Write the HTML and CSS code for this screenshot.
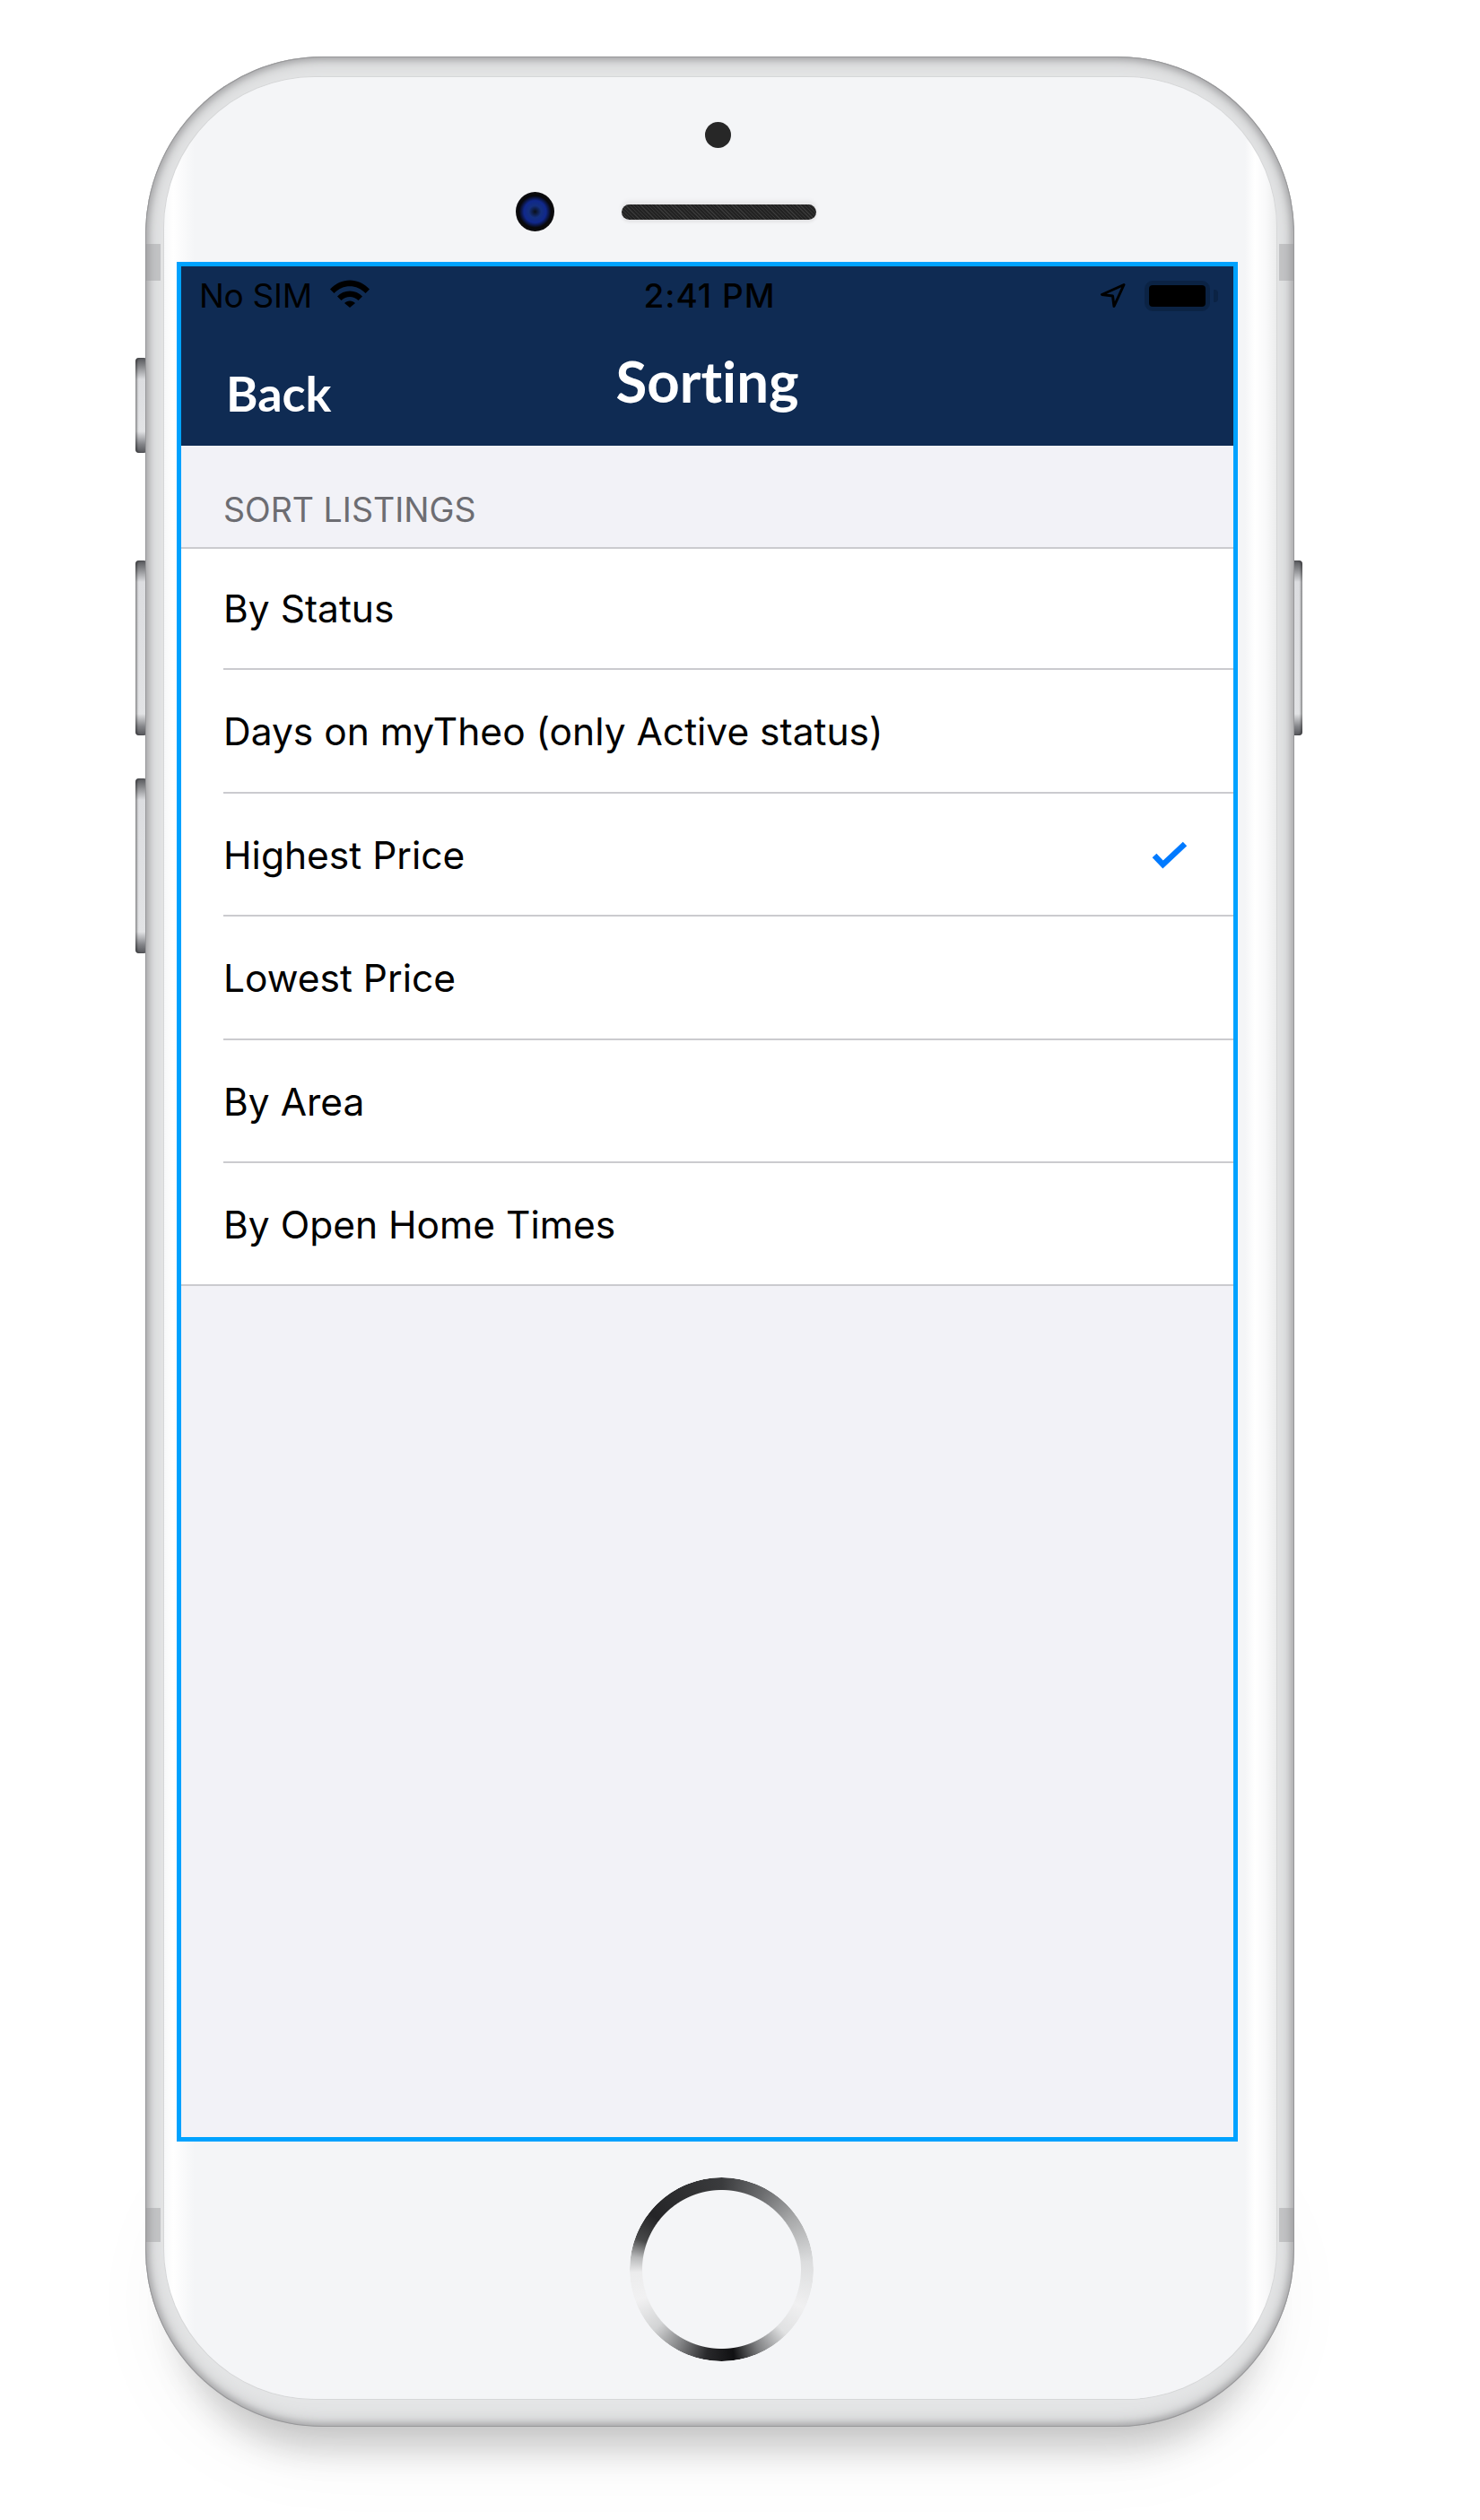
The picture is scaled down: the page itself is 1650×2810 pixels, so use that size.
FILE: index.html
```html
<!DOCTYPE html>
<html lang="en">
<head>
  <meta charset="UTF-8">
  <title>Sorting</title>
  <link rel="stylesheet" href="styles.css">
</head>
<body>

  <div class="phone">
    <span class="side-btn btn-mute"></span>
    <span class="side-btn btn-up"></span>
    <span class="side-btn btn-down"></span>
    <span class="side-btn btn-power"></span>
    <span class="band band-tl"></span>
    <span class="band band-tr"></span>
    <span class="band band-bl"></span>
    <span class="band band-br"></span>

    <div class="face">
      <div class="earpiece">
        <span class="sensor"></span>
        <div class="camera-row">
          <span class="camera"></span>
          <span class="speaker"></span>
        </div>
      </div>

      <div class="screen">
        <header class="navbar">
          <div class="status-bar">
            <div class="status-left">
              <span>No SIM</span>
              <svg class="wifi" viewBox="0 0 44 31">
                <path d="M0 10.5C12 -3 32 -3 44 10.5L39.5 15C30 4.5 14 4.5 4.5 15Z"/>
                <path d="M8 18.5C15 10.5 29 10.5 36 18.5L31.5 23C26 17.5 18 17.5 12.500 23Z"/>
                <path d="M16 26C19 22.500 25 22.500 28 26L22 31Z"/>
              </svg>
            </div>
            <span class="status-time">2:41 PM</span>
            <div class="status-right">
              <svg class="arrow" viewBox="0 0 28 27">
                <path d="M26 1.500L1.500 12.500L13.500 14L15 25.500Z"/>
              </svg>
              <span class="battery"><span class="battery-fill"></span></span>
              <span class="battery-nub"></span>
            </div>
          </div>
          <div class="nav-row">
            <span class="nav-back">Back</span>
            <h1 class="nav-title">Sorting</h1>
            <span></span>
          </div>
        </header>

        <h2 class="section-label">SORT LISTINGS</h2>
        <ul class="sort-list">
          <li><div class="row">By Status</div></li>
          <li><div class="row">Days on myTheo (only Active status)</div></li>
          <li>
            <div class="row">
              Highest Price
              <svg class="check" viewBox="0 0 42 33">
                <path d="M4 17L13.500 27L38 4"/>
              </svg>
            </div>
          </li>
          <li><div class="row">Lowest Price</div></li>
          <li><div class="row">By Area</div></li>
          <li><div class="row">By Open Home Times</div></li>
        </ul>
      </div>

      <div class="chin">
        <span class="home-btn"></span>
      </div>
    </div>
  </div>

</body>
</html>
```

FILE: styles.css
```css
html {
  background: #fff;
}
body {
  margin: 0;
  width: 1650px;
  height: 2810px;
  overflow: hidden;
  font-family: Inter, "Liberation Sans", sans-serif;
}

/* phone body */
.phone {
  position: relative;
  box-sizing: border-box;
  width: 1281px;
  height: 2643px;
  margin: 63px 0 0 162px;
  padding: 23px 20px 31px 21px;
  border-radius: 198px;
  background: #e4e5e6;
  box-shadow:
    inset 0 0 0 1px #98989a,
    inset 0 0 7px 4px #a8a8aa,
    inset 0 0 18px 8px #cfd0d1;
}
.phone::before {
  content: "";
  position: absolute;
  z-index: -1;
  left: 40px;
  right: 40px;
  bottom: 6px;
  height: 300px;
  border-radius: 180px;
  box-shadow:
    0 28px 40px rgba(0,0,0,0.2),
    0 14px 110px rgba(0,0,0,0.08);
}

.side-btn {
  position: absolute;
  z-index: -1;
  width: 13px;
  border-radius: 4px;
  background: linear-gradient(to bottom, #55565a 0, #8a8b8e 10px, #dcdde0 24px, #e2e3e5 calc(100% - 24px), #85868a calc(100% - 10px), #55565a 100%);
  box-shadow: inset 2px 0 2px rgba(0,0,0,0.35);
}
.btn-mute { left: -11px; top: 336px; height: 106px; }
.btn-up { left: -11px; top: 562px; height: 195px; }
.btn-down { left: -11px; top: 805px; height: 195px; }
.btn-power { right: -9px; top: 562px; height: 195px; box-shadow: inset -2px 0 2px rgba(0,0,0,0.35); }

.band {
  position: absolute;
  width: 17px;
  height: 41px;
  background: rgba(150,150,152,0.4);
}
.band-tl { left: 0; top: 209px; }
.band-tr { right: 0; top: 209px; }
.band-bl { left: 0; top: 2399px; height: 38px; }
.band-br { right: 0; top: 2399px; height: 38px; }

/* front glass */
.face {
  box-sizing: border-box;
  height: 2589px;
  padding: 0 0 0 14px;
  border-radius: 168px;
  display: flex;
  flex-direction: column;
  background: linear-gradient(to right, #f7f8f9 0, #fff 10px, #f4f5f7 34px, #f4f5f7 1205px, #fff 1216px, #f9f9fa 1228px, #eceded 1240px);
  box-shadow: 0 0 0 1px #d6d7d8;
}

.earpiece {
  height: 206px;
  display: flex;
  flex-direction: column;
  flex-shrink: 0;
}
.sensor {
  width: 29px;
  height: 29px;
  margin: 50px 0 0 589px;
  border-radius: 50%;
  background: #272727;
}
.camera-row {
  display: flex;
  align-items: center;
  margin: 49px 0 0 378px;
}
.camera {
  width: 43px;
  height: 44px;
  border-radius: 50%;
  background: radial-gradient(circle at 50% 50%, #0a0f18 0, #14307f 22%, #10288c 40%, #08080b 58%, #161618 100%);
}
.speaker {
  width: 217px;
  height: 17px;
  margin-left: 75px;
  border-radius: 9px;
  background: repeating-linear-gradient(45deg, #232323 0 2px, #383838 2px 3px);
  box-shadow: 0 -4px 4px #e6e6e8, 0 3px 3px #e4e4e6;
}

/* screen */
.screen {
  box-sizing: border-box;
  width: 1183px;
  height: 2096px;
  flex-shrink: 0;
  border: 5px solid #00a2ff;
  background: #f2f2f7;
}

.navbar {
  box-sizing: border-box;
  height: 200px;
  background: #0f2b53;
}
.status-bar {
  display: grid;
  grid-template-columns: 1fr auto 1fr;
  align-items: center;
  height: 42px;
  padding: 10px 17px 0 20px;
  color: #000;
  font-size: 37px;
}
.status-left {
  display: flex;
  align-items: center;
  gap: 20px;
  letter-spacing: -0.3px;
}
.wifi {
  width: 44px;
  height: 31px;
  margin-top: -5px;
}
.status-time {
  font-weight: 500;
  letter-spacing: 1px;
  margin-left: 2px;
}
.status-right {
  display: flex;
  align-items: center;
  justify-content: flex-end;
}
.arrow {
  width: 28px;
  height: 27px;
  margin-right: 21px;
  fill: none;
  stroke: #000;
  stroke-width: 3;
  stroke-linejoin: round;
}
.battery {
  box-sizing: border-box;
  display: block;
  width: 73px;
  height: 34px;
  padding: 4px;
  border: 1px solid #0b2344;
  border-radius: 9px;
  box-shadow: inset 0 0 0 4px #0b2344;
}
.battery-fill {
  display: block;
  height: 100%;
  border-radius: 4px;
  background: #000;
}
.battery-nub {
  width: 5px;
  height: 14px;
  margin-left: 4px;
  border-radius: 0 4px 4px 0;
  background: #0b2344;
}

.nav-row {
  display: grid;
  grid-template-columns: 1fr auto 1fr;
  padding-left: 50px;
  color: #fff;
  font-family: Lato, sans-serif;
  font-weight: 700;
  font-variant-ligatures: none;
  margin-top: 2px;
}
.nav-back {
  font-size: 54px;
  line-height: 60px;
  margin-top: 58px;
}
.nav-title {
  margin: 38px 0 0 -50px;
  font-size: 63.5px;
  line-height: 72px;
  font-weight: 700;
}

.section-label {
  box-sizing: border-box;
  height: 113px;
  margin: 0;
  padding: 50px 0 0 47px;
  color: #6d6d72;
  font-size: 37.5px;
  line-height: 44px;
  font-weight: 400;
}

.sort-list {
  list-style: none;
  margin: 0;
  padding: 0;
  background: #fff;
  border-top: 2px solid #cbcbcf;
  border-bottom: 2px solid #cbcbcf;
}
.sort-list li {
  padding-left: 47px;
}
.row {
  box-sizing: border-box;
  display: flex;
  align-items: center;
  justify-content: space-between;
  height: 137.6px;
  padding: 2px 50px 0 0;
  border-bottom: 2px solid #cbcbcf;
  color: #000;
  font-size: 42.5px;
}
.sort-list li:first-child .row {
  height: 135px;
  padding-top: 0;
}
.sort-list li:last-child .row {
  height: 135px;
  border-bottom: none;
}
.check {
  width: 42px;
  height: 33px;
  fill: none;
  stroke: #007aff;
  stroke-width: 6.5;
}

/* bottom of the phone */
.chin {
  flex: 1;
  display: flex;
  align-items: flex-start;
  margin-left: 505px;
}
.home-btn {
  width: 205px;
  height: 205px;
  margin-top: 40px;
  border-radius: 50%;
  background: conic-gradient(from 0deg, #3a3b3d 0deg, #6b6c6e 28deg, #a9aaab 55deg, #dcddde 85deg, #f0f0f1 115deg, #e0e1e2 135deg, #808183 155deg, #101012 172deg, #29292b 190deg, #7e7f81 208deg, #d2d3d4 228deg, #f1f1f2 250deg, #ececed 268deg, #b8b9ba 278deg, #48494a 290deg, #252527 308deg, #3a3b3d 360deg);
  -webkit-mask: radial-gradient(circle, transparent 88px, #000 89px, #000 102px, transparent 103px);
  mask: radial-gradient(circle, transparent 88px, #000 89px, #000 102px, transparent 103px);
}
```
